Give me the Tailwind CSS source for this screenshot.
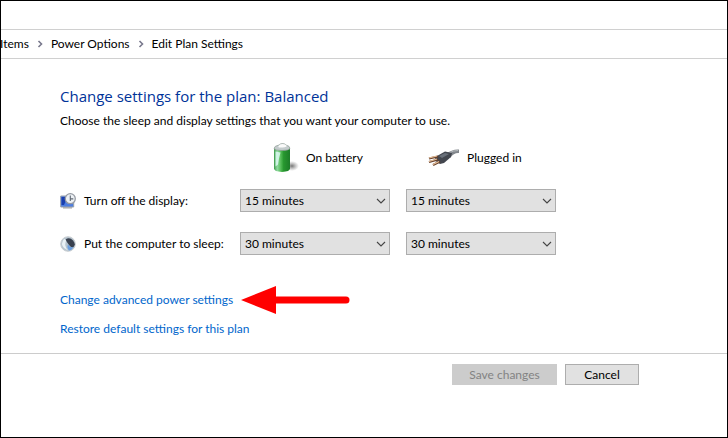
<!DOCTYPE html>
<html lang="en">
<head>
<meta charset="utf-8">
<title>Edit Plan Settings</title>
<script src="https://cdn.jsdelivr.net/npm/@tailwindcss/browser@4"></script>
</head>
<body class="min-h-screen flex flex-col bg-white border border-black text-black text-[12px] leading-4 font-['Lato','Open_Sans',sans-serif]">
<nav aria-label="Breadcrumb" class="mt-7 h-[30px] flex items-center gap-[7px] border-y border-[#d0d0d0] overflow-hidden">
  <a href="#" class="-ml-px">Items</a>
  <svg class="w-2 h-2" viewBox="0 0 8 8" fill="none" stroke="#78788c" stroke-width="1.6"><path d="M2.5 1l3 3-3 3"/></svg>
  <a href="#">Power Options</a>
  <svg class="w-2 h-2" viewBox="0 0 8 8" fill="none" stroke="#78788c" stroke-width="1.6"><path d="M2.5 1l3 3-3 3"/></svg>
  <a href="#">Edit Plan Settings</a>
</nav>
<main class="pl-[59px] pt-[27px]">
  <h1 class="text-[15px] leading-5 text-[#003399] font-['Open_Sans',sans-serif]">Change settings for the plan: Balanced</h1>
  <p class="mt-[7px]">Choose the sleep and display settings that you want your computer to use.</p>

  <div class="mt-[13px] grid grid-cols-[180px_166px_150px] items-center">
    <div class="col-start-2 pl-8 flex items-center gap-1.5 h-8">
      <svg class="w-7 h-8" viewBox="0 0 28 32">
        <defs>
          <linearGradient id="cell" x1="0" x2="1"><stop offset="0" stop-color="#3d9a49"/><stop offset=".2" stop-color="#8fd9a0"/><stop offset=".42" stop-color="#55bd58"/><stop offset=".6" stop-color="#27972f"/><stop offset="1" stop-color="#1c7c28"/></linearGradient>
          <radialGradient id="shade"><stop offset="0" stop-color="#777"/><stop offset="1" stop-color="#999" stop-opacity="0"/></radialGradient>
        </defs>
        <ellipse cx="20" cy="24" rx="7" ry="5" fill="url(#shade)"/>
        <path d="M2 6v20.500q0 3 8 3.500 8-.5 8-3.500V6z" fill="url(#cell)"/>
        <path d="M2 6.500q0-2.500 5-3.500 1-1.500 3.500-1.500T14 3q4 1 4 3.500-1 2-8 2t-8-2z" fill="#c4cccd" stroke="#84938c" stroke-width=".6"/>
        <path d="M6.500 4q1-2 4-2t4 1.500-4 2-4-1.500z" fill="#fafafa"/>
        <path d="M3.500 9.500l5 1-1.500 6-1 6-2.500 2z" fill="#e8ffff" opacity=".75"/>
      </svg>
      <span id="battery">On battery</span>
    </div>
    <div class="pl-[21px] flex items-center gap-1.5 h-8">
      <svg class="w-[34px] h-5" viewBox="0 0 34 20">
        <path d="M19 6q6-5 13-4.500V5q-5-.5-9 5z" fill="#82878c"/>
        <path d="M22 5q4-2.500 9-2.500" stroke="#b5babd" fill="none"/>
        <path d="M10 8l8-4.500 7 1.500-1 4-7 6-4 1-6-4z" fill="#43474f"/>
        <path d="M12 8l6-3 4 1-7 4z" fill="#69707a"/>
        <path d="M2 10.500l9-2M2 14l9-2.500M6 17l7-3.500" stroke="#68412c" stroke-width="2.300"/>
        <path d="M2 10l8-2M2 13.500l8-2.500M6 16.500l6-3" stroke="#e8c09a" stroke-width="1.200"/>
      </svg>
      <span id="plugged">Plugged in</span>
    </div>
  </div>

  <div class="mt-[15px] flex flex-col gap-5">
    <div class="grid grid-cols-[180px_150px_166px] items-center">
      <div class="flex items-center gap-2">
        <svg class="w-4 h-4" viewBox="0 0 16 16"><path d="M.7 3h13v11H.7z" fill="#4d7de0" stroke="#9aa0a8"/><path d="M1.500 4h6L4 12H1.500z" fill="#1a3fae"/><path d="M3 14.200h9v1.300H3z" fill="#a5a5a5"/><circle cx="10.300" cy="5.700" r="5" fill="#edf1f5" stroke="#969ba3" stroke-width="1.300"/><path d="M10.300 2.500v3.400h3M10.300 6v2" fill="none" stroke="#626a74" stroke-width="1.100"/></svg>
        <span id="display">Turn off the display:</span>
      </div>
      <div class="relative">
        <select aria-labelledby="display battery" class="appearance-none block w-full h-[23px] pl-1 bg-[#e1e1e1] border border-[#adadad]"><option>15 minutes</option></select>
        <svg class="absolute right-1 top-2 w-[10px] h-2 pointer-events-none" viewBox="0 0 10 8" fill="none" stroke="#444" stroke-width="1.100"><path d="M1 2l4 4 4-4"/></svg>
      </div>
      <div class="relative ml-4">
        <select aria-labelledby="display plugged" class="appearance-none block w-full h-[23px] pl-1 bg-[#e1e1e1] border border-[#adadad]"><option>15 minutes</option></select>
        <svg class="absolute right-1 top-2 w-[10px] h-2 pointer-events-none" viewBox="0 0 10 8" fill="none" stroke="#444" stroke-width="1.100"><path d="M1 2l4 4 4-4"/></svg>
      </div>
    </div>
    <div class="grid grid-cols-[180px_150px_166px] items-center">
      <div class="flex items-center gap-2">
        <svg class="w-4 h-4" viewBox="0 0 16 16"><circle cx="8" cy="8" r="7.300" fill="#b5c4cf" stroke="#c8cdd1"/><path d="M4 3q-4 5 0 9l4 2.500q-5-6-1-11z" fill="#e9f1f5"/><path d="M5.500 3.500q4-3 7.500 1t0 7q-2 0-4-2.500t-3.500-5.500z" fill="#39414f"/><path d="M8 8.500q2 3.500 5.500 2.500-2 3.500-4.500 3.500-2.500-3-1-6z" fill="#6b9fe0"/></svg>
        <span id="sleep">Put the computer to sleep:</span>
      </div>
      <div class="relative">
        <select aria-labelledby="sleep battery" class="appearance-none block w-full h-[23px] pl-1 bg-[#e1e1e1] border border-[#adadad]"><option>30 minutes</option></select>
        <svg class="absolute right-1 top-2 w-[10px] h-2 pointer-events-none" viewBox="0 0 10 8" fill="none" stroke="#444" stroke-width="1.100"><path d="M1 2l4 4 4-4"/></svg>
      </div>
      <div class="relative ml-4">
        <select aria-labelledby="sleep plugged" class="appearance-none block w-full h-[23px] pl-1 bg-[#e1e1e1] border border-[#adadad]"><option>30 minutes</option></select>
        <svg class="absolute right-1 top-2 w-[10px] h-2 pointer-events-none" viewBox="0 0 10 8" fill="none" stroke="#444" stroke-width="1.100"><path d="M1 2l4 4 4-4"/></svg>
      </div>
    </div>
  </div>

  <div class="mt-[31px] flex items-center gap-2 h-7 text-[#0066cc]">
    <a href="#">Change advanced power settings</a>
    <svg class="w-[109px] h-7" viewBox="0 0 109 28"><path d="M0 14L35 0v28z" fill="#f00"/><path d="M34 14h71" stroke="#f00" stroke-width="7" stroke-linecap="round"/></svg>
  </div>
  <a href="#" class="block w-fit mt-[7px] text-[#0066cc]">Restore default settings for this plan</a>
</main>
<footer class="mt-4 border-t border-[#cccccc] pt-[10px] pr-[88px] flex justify-end gap-2">
  <button disabled class="w-[105px] h-[21px] flex items-center justify-center bg-[#cccccc] text-[#838383]">Save changes</button>
  <button class="w-[74px] h-[21px] flex items-center justify-center bg-[#e1e1e1] border border-[#adadad]">Cancel</button>
</footer>
</body>
</html>
